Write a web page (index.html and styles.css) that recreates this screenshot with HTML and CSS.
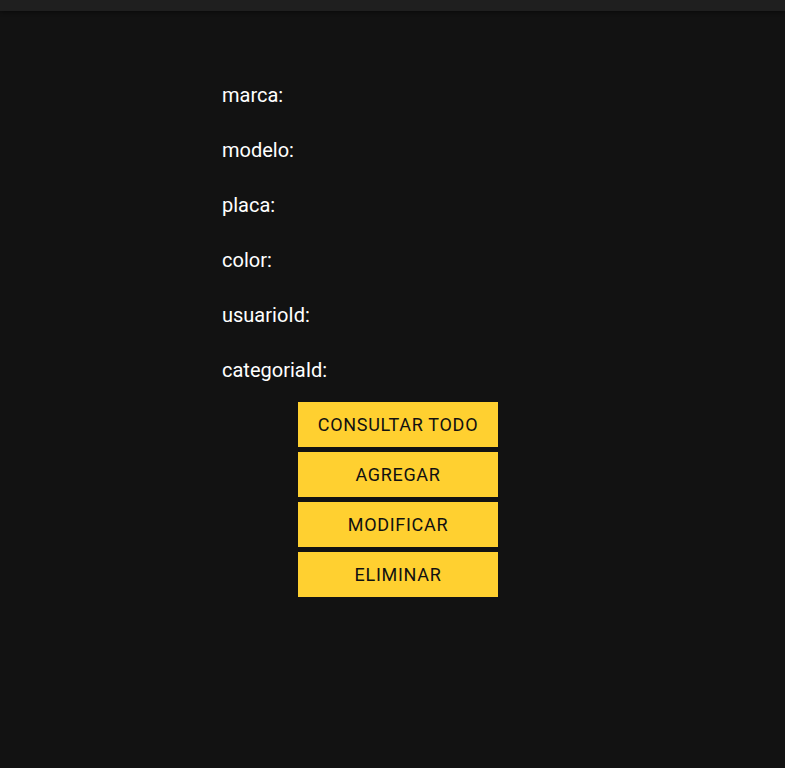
FILE: index.html
```html
<!DOCTYPE html>
<html lang="es">
<head>
<meta charset="utf-8">
<title>Vehiculos</title>
<link rel="stylesheet" href="styles.css">
</head>
<body>
<header class="topbar"></header>
<main class="page">
  <form class="form">
    <div class="fields">
      <label class="field">marca:</label>
      <label class="field">modelo:</label>
      <label class="field">placa:</label>
      <label class="field">color:</label>
      <label class="field">usuarioId:</label>
      <label class="field">categoriaId:</label>
    </div>
    <div class="actions">
      <button type="button" class="btn">CONSULTAR TODO</button>
      <button type="button" class="btn">AGREGAR</button>
      <button type="button" class="btn">MODIFICAR</button>
      <button type="button" class="btn">ELIMINAR</button>
    </div>
  </form>
</main>
</body>
</html>
```
FILE: styles.css
```css
html, body {
  margin: 0;
  padding: 0;
  background: #121212;
  height: 100%;
}
body {
  font-family: Roboto, "Liberation Sans", sans-serif;
  color: #ffffff;
}
.topbar {
  height: 11px;
  background: #1f1f1f;
  box-shadow: 0 1px 4px rgba(0, 0, 0, 0.5);
}
.page {
  padding-top: 73px;
}
.form {
  display: flex;
  flex-direction: column;
  align-items: flex-start;
  padding-left: 222px;
}
.fields {
  display: flex;
  flex-direction: column;
  gap: 32px;
}
.field {
  font-size: 20px;
  line-height: 23px;
  display: block;
}
.actions {
  display: flex;
  flex-direction: column;
  gap: 5px;
  margin-top: 20px;
  margin-left: 76px;
}
.btn {
  width: 200px;
  height: 45px;
  border: none;
  border-radius: 0;
  background: #ffd030;
  color: #111111;
  font-family: Roboto, "Liberation Sans", sans-serif;
  font-size: 18px;
  letter-spacing: 0.7px;
  padding: 0;
  cursor: pointer;
}
```
